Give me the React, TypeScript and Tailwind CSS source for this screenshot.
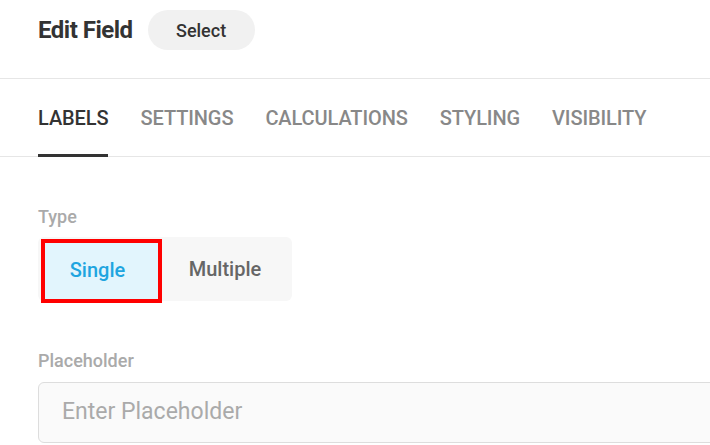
import React from "react";

const tabs = ["LABELS", "SETTINGS", "CALCULATIONS", "STYLING", "VISIBILITY"];

export default function App() {
  return (
    <div
      className="w-[710px] h-[445px] overflow-hidden bg-white"
      style={{ fontFamily: "Roboto, 'Liberation Sans', sans-serif" }}
    >
      <div className="h-[79px] pt-[10px] px-[38px] border-b border-[#e6e6e6]">
        <div className="h-[40px] flex items-center gap-[15px]">
          <div className="text-[24px] font-bold text-[#333333] tracking-[-0.5px]">Edit Field</div>
          <button className="h-[40px] w-[107px] rounded-full bg-[#f1f1f1] text-[18px] font-medium text-[#333333]">
            Select
          </button>
        </div>
      </div>
      <div className="h-[78px] flex gap-[32px] px-[38px] border-b border-[#e6e6e6]">
        {tabs.map((t, i) => (
          <div
            key={t}
            className={`relative flex items-center text-[20px] font-medium tracking-[-0.1px] ${
              i === 0 ? "text-[#333333]" : "text-[#888888]"
            }`}
          >
            {t}
            {i === 0 && (
              <div className="absolute left-0 right-0 bottom-[-1px] h-[3px] bg-[#333333]" />
            )}
          </div>
        ))}
      </div>
      <div className="px-[38px] pt-[48px]">
        <div className="text-[18px] leading-[24px] font-medium text-[#aaaaaa]">Type</div>
        <div className="mt-[8px] flex h-[64px] w-[254px] rounded-[6px] bg-[#f7f7f7] pl-[3px]">
          <button className="mt-[2px] h-[64px] w-[121px] shrink-0 border-[4px] border-[#ff0000] bg-[#e2f5fd] pb-[3px] pr-[8px] text-[20px] font-medium text-[#1ea5e0]">
            Single
          </button>
          <button className="flex-1 pr-[4px] text-[20px] font-medium text-[#666666]">Multiple</button>
        </div>
        <div className="mt-[48px] text-[18px] leading-[24px] font-medium text-[#aaaaaa]">Placeholder</div>
        <div className="mt-[9px] h-[61px] w-[700px] rounded-[6px] border border-[#dddddd] bg-[#fafafa] flex items-center pl-[23px] text-[23px] text-[#aaaaaa]">
          Enter Placeholder
        </div>
      </div>
    </div>
  );
}
